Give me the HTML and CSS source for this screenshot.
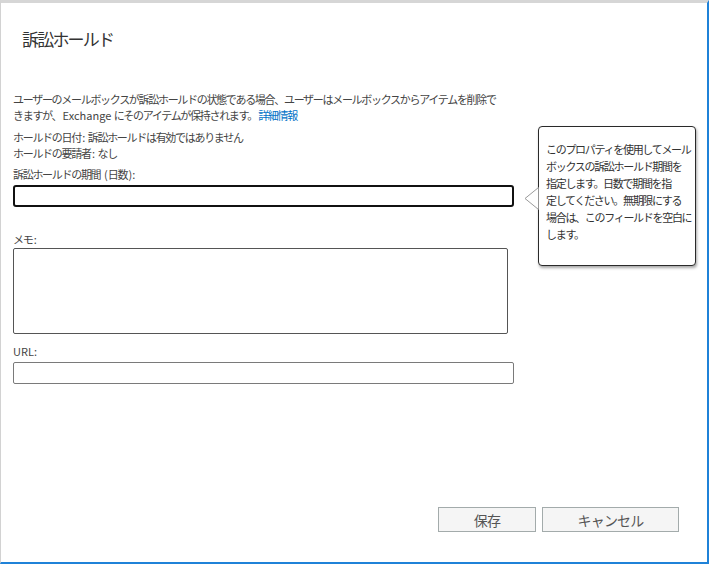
FILE: index.html
```html
<!DOCTYPE html>
<html lang="ja">
<head>
<meta charset="utf-8">
<title>訴訟ホールド</title>
<link rel="stylesheet" href="styles.css">
</head>
<body>
<div class="window">
  <h1 class="title">訴訟ホールド</h1>
  <p class="intro">ユーザーのメールボックスが訴訟ホールドの状態である場合、ユーザーはメールボックスからアイテムを削除できますが、<span class="latin">Exchange </span>にそのアイテムが保持されます。<a class="link" href="#">詳細情報</a></p>
  <div class="info">
    <div>ホールドの日付<span class="latin">: </span>訴訟ホールドは有効ではありません</div>
    <div>ホールドの要請者<span class="latin">: </span>なし</div>
  </div>
  <label class="label label-period">訴訟ホールドの期間<span class="latin"> (</span>日数<span class="latin">):</span></label>
  <div class="field field-focus"></div>
  <label class="label label-memo">メモ<span class="latin">:</span></label>
  <div class="memo"></div>
  <label class="label label-url latin">URL:</label>
  <div class="field field-url"></div>
  <div class="buttons">
    <button class="btn btn-save">保存</button>
    <button class="btn btn-cancel">キャンセル</button>
  </div>
  <div class="callout">
    <svg class="callout-arrow" width="15" height="23" viewBox="0 0 15 23">
      <path d="M14.5 0.5 L1 11.5 L14.5 22.5" fill="#fff" stroke="#9a9a9a" stroke-width="1"/>
    </svg>
    <p class="callout-text">このプロパティを使用してメール<br>ボックスの訴訟ホールド期間を<br>指定します。日数で期間を指<br>定してください。無期限にする<br>場合は、このフィールドを空白に<br>します。</p>
  </div>
</div>
</body>
</html>
```

FILE: styles.css
```css
* { box-sizing: border-box; }
html, body { margin: 0; padding: 0; background: #fff; }
body {
  font-family: "Noto Sans CJK JP", "Noto Sans", sans-serif;
  color: #444;
}
.window {
  position: relative;
  width: 709px;
  height: 564px;
  border-top: 3px solid #d6d6d6;
  border-left: 1px solid #d2d2d2;
  border-right: 2px solid #1f82d8;
  border-bottom: 2px solid #1f82d8;
  padding: 0 0 30px 12px;
  display: flex;
  flex-direction: column;
  align-items: flex-start;
  font-size: 11px;
  letter-spacing: -1.3px;
}
.latin { letter-spacing: 0; padding-left: 1.3px; }
.label-url { padding-left: 0; }
.title {
  margin: 24px 0 0 9px;
  font-size: 17px;
  font-weight: 400;
  line-height: 24px;
  letter-spacing: -1.8px;
  color: #333;
}
.intro {
  margin: 40px 0 0;
  width: 490px;
  line-height: 16px;
}
.link { color: #0072c6; text-decoration: none; padding-left: 1.3px; }
.info {
  margin-top: 6px;
  line-height: 16px;
}
.label {
  display: block;
  margin-top: 6px;
  line-height: 16px;
  color: #444;
}
.label-period { margin-top: 5px; }
.field {
  margin-top: 3px;
  width: 501px;
  height: 22px;
  border: 1px solid #7a7a7a;
  border-radius: 2px;
  background: #fff;
}
.field-focus {
  border: 2px solid #111;
  border-radius: 3px;
}
.label-memo { margin-top: 24px; }
.memo {
  margin-top: 1px;
  width: 495px;
  height: 86px;
  border: 1px solid #555;
  border-radius: 2px;
}
.label-url { margin-top: 9px; }
.field-url { margin-top: 3px; }
.buttons {
  margin-top: auto;
  align-self: flex-end;
  margin-right: 28px;
  display: flex;
  gap: 6px;
}
.btn {
  height: 25px;
  padding: 0;
  border: 1px solid #a3abab;
  background: #f5f5f5;
  font-family: inherit;
  font-size: 14px;
  letter-spacing: -0.8px;
  color: #555;
  line-height: 22px;
}
.btn-save { width: 98px; }
.btn-cancel { width: 137px; }
.callout {
  position: absolute;
  left: 537px;
  top: 123px;
  width: 158px;
  height: 140px;
  border: 1px solid #2a2a2a;
  border-radius: 4px;
  background: #fff;
  box-shadow: 1px 2px 3px rgba(0,0,0,0.35);
  padding: 14px 0 0 7px;
}
.callout-arrow {
  position: absolute;
  left: -15px;
  top: 60px;
}
.callout-text {
  margin: 0;
  line-height: 17px;
  color: #333;
  white-space: nowrap;
}
```
